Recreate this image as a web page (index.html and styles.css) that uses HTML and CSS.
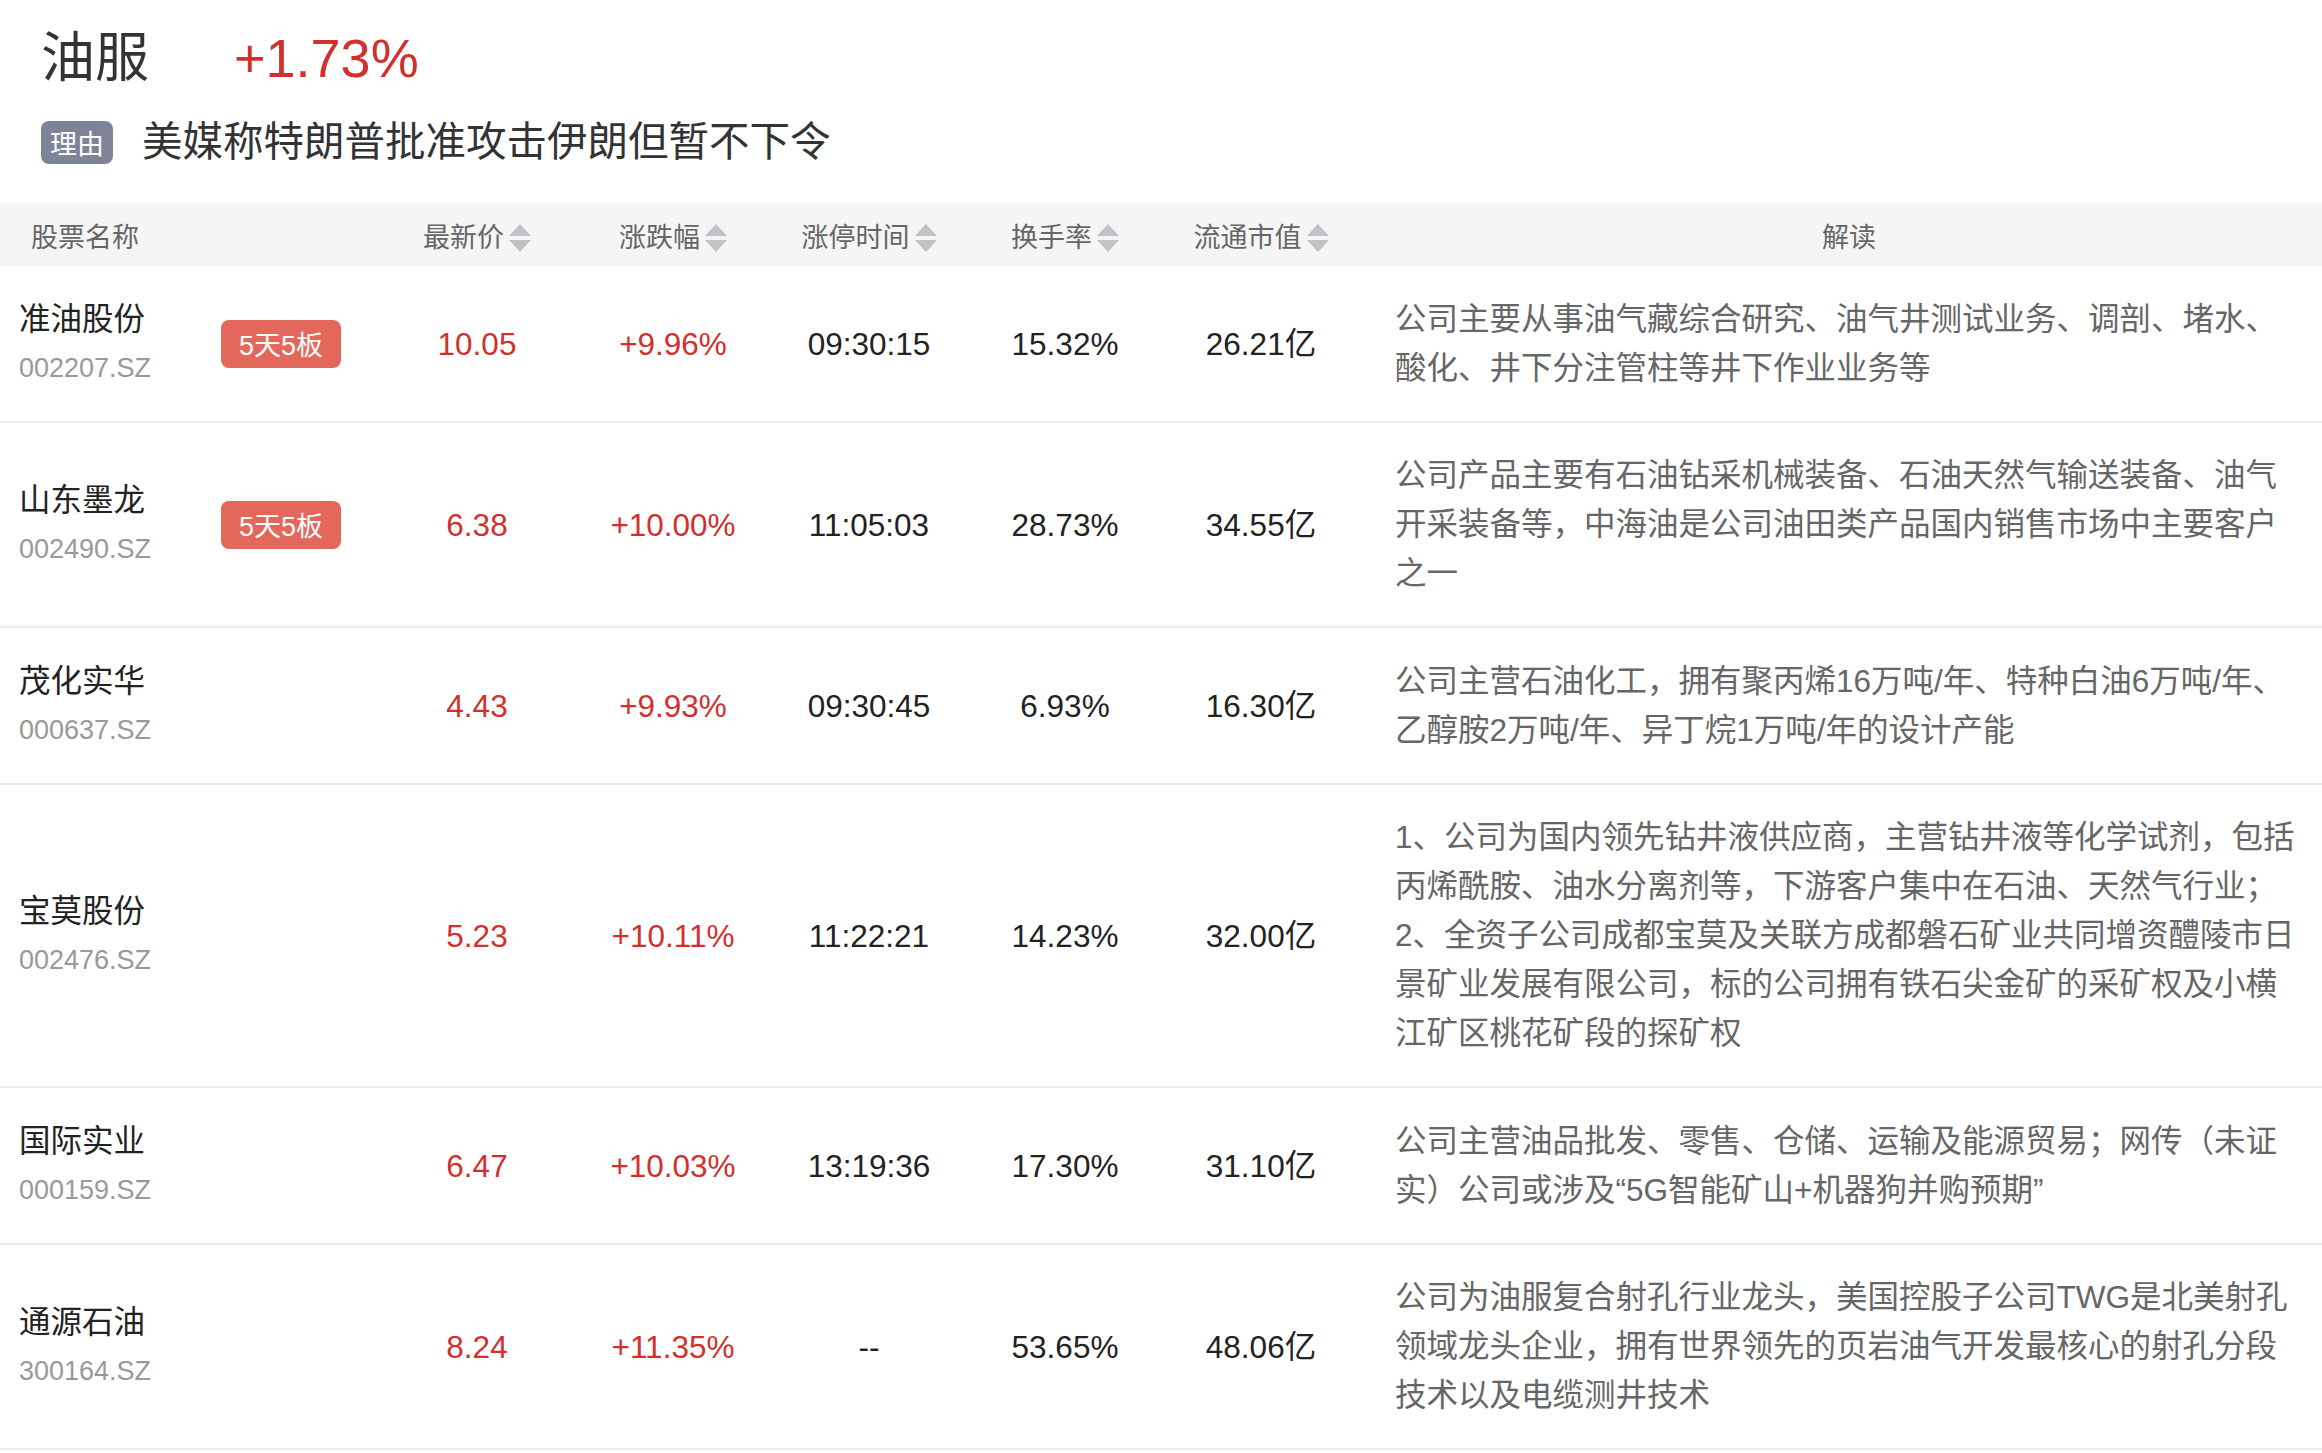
FILE: index.html
```html
<!DOCTYPE html>
<html lang="zh-CN">
<head>
<meta charset="utf-8">
<title>油服</title>
<link rel="stylesheet" href="styles.css">
</head>
<body>
<div class="page">
  <section class="topic">
    <div class="title-row"><span class="title">油服</span><span class="pct">+1.73%</span></div>
    <div class="reason-row"><span class="reason-tag">理由</span><span class="reason">美媒称特朗普批准攻击伊朗但暂不下令</span></div>
  </section>

  <div class="table">
    <div class="thead">
      <div class="th-name">股票名称</div>
      <div class="th">最新价<svg class="sort" viewBox="0 0 22 28"><path d="M11 0 L22 12 L0 12 Z"/><path d="M0 16 L22 16 L11 28 Z"/></svg></div>
      <div class="th">涨跌幅<svg class="sort" viewBox="0 0 22 28"><path d="M11 0 L22 12 L0 12 Z"/><path d="M0 16 L22 16 L11 28 Z"/></svg></div>
      <div class="th">涨停时间<svg class="sort" viewBox="0 0 22 28"><path d="M11 0 L22 12 L0 12 Z"/><path d="M0 16 L22 16 L11 28 Z"/></svg></div>
      <div class="th">换手率<svg class="sort" viewBox="0 0 22 28"><path d="M11 0 L22 12 L0 12 Z"/><path d="M0 16 L22 16 L11 28 Z"/></svg></div>
      <div class="th">流通市值<svg class="sort" viewBox="0 0 22 28"><path d="M11 0 L22 12 L0 12 Z"/><path d="M0 16 L22 16 L11 28 Z"/></svg></div>
      <div class="th-desc">解读</div>
    </div>

    <div class="row">
      <div class="name-cell"><div class="name">准油股份</div><div class="code">002207.SZ</div></div>
      <div class="badge-cell"><span class="badge">5天5板</span></div>
      <div class="num red">10.05</div>
      <div class="num red">+9.96%</div>
      <div class="num">09:30:15</div>
      <div class="num">15.32%</div>
      <div class="num">26.21亿</div>
      <div class="desc">公司主要从事油气藏综合研究、油气井测试业务、调剖、堵水、酸化、井下分注管柱等井下作业业务等</div>
    </div>

    <div class="row">
      <div class="name-cell"><div class="name">山东墨龙</div><div class="code">002490.SZ</div></div>
      <div class="badge-cell"><span class="badge">5天5板</span></div>
      <div class="num red">6.38</div>
      <div class="num red">+10.00%</div>
      <div class="num">11:05:03</div>
      <div class="num">28.73%</div>
      <div class="num">34.55亿</div>
      <div class="desc">公司产品主要有石油钻采机械装备、石油天然气输送装备、油气开采装备等，中海油是公司油田类产品国内销售市场中主要客户之一</div>
    </div>

    <div class="row">
      <div class="name-cell"><div class="name">茂化实华</div><div class="code">000637.SZ</div></div>
      <div class="badge-cell"></div>
      <div class="num red">4.43</div>
      <div class="num red">+9.93%</div>
      <div class="num">09:30:45</div>
      <div class="num">6.93%</div>
      <div class="num">16.30亿</div>
      <div class="desc">公司主营石油化工，拥有聚丙烯16万吨/年、特种白油6万吨/年、乙醇胺2万吨/年、异丁烷1万吨/年的设计产能</div>
    </div>

    <div class="row">
      <div class="name-cell"><div class="name">宝莫股份</div><div class="code">002476.SZ</div></div>
      <div class="badge-cell"></div>
      <div class="num red">5.23</div>
      <div class="num red">+10.11%</div>
      <div class="num">11:22:21</div>
      <div class="num">14.23%</div>
      <div class="num">32.00亿</div>
      <div class="desc">1、公司为国内领先钻井液供应商，主营钻井液等化学试剂，包括丙烯酰胺、油水分离剂等，下游客户集中在石油、天然气行业；<br>2、全资子公司成都宝莫及关联方成都磐石矿业共同增资醴陵市日景矿业发展有限公司，标的公司拥有铁石尖金矿的采矿权及小横江矿区桃花矿段的探矿权</div>
    </div>

    <div class="row">
      <div class="name-cell"><div class="name">国际实业</div><div class="code">000159.SZ</div></div>
      <div class="badge-cell"></div>
      <div class="num red">6.47</div>
      <div class="num red">+10.03%</div>
      <div class="num">13:19:36</div>
      <div class="num">17.30%</div>
      <div class="num">31.10亿</div>
      <div class="desc">公司主营油品批发、零售、仓储、运输及能源贸易；网传（未证实）公司或涉及“5G智能矿山+机器狗并购预期”</div>
    </div>

    <div class="row">
      <div class="name-cell"><div class="name">通源石油</div><div class="code">300164.SZ</div></div>
      <div class="badge-cell"></div>
      <div class="num red">8.24</div>
      <div class="num red">+11.35%</div>
      <div class="num">--</div>
      <div class="num">53.65%</div>
      <div class="num">48.06亿</div>
      <div class="desc">公司为油服复合射孔行业龙头，美国控股子公司TWG是北美射孔领域龙头企业，拥有世界领先的页岩油气开发最核心的射孔分段技术以及电缆测井技术</div>
    </div>
  </div>
</div>
</body>
</html>
```

FILE: styles.css
```css
html, body {
  margin: 0;
  padding: 0;
  background: #ffffff;
}

body {
  font-family: "Liberation Sans", "Noto Sans CJK SC", sans-serif;
  color: #222222;
}

.topic {
  padding: 23px 0 31px 41px;
}

.title-row {
  display: flex;
  align-items: center;
  height: 70px;
  font-size: 54px;
  line-height: 70px;
}

.title {
  color: #333333;
}

.pct {
  color: #d2302c;
  margin-left: 85px;
}

.reason-row {
  display: flex;
  align-items: center;
  height: 60px;
  margin-top: 19px;
}

.reason-tag {
  width: 72px;
  height: 43px;
  border-radius: 8px;
  background: #7e8398;
  color: #ffffff;
  font-size: 27px;
  display: flex;
  align-items: center;
  justify-content: center;
}

.reason {
  margin-left: 29px;
  font-size: 40.5px;
  line-height: 60px;
  color: #333333;
}

.thead,
.row {
  display: grid;
  grid-template-columns: 221px 158px repeat(5, 196px) 1fr;
  align-items: center;
}

.thead {
  height: 63px;
  box-sizing: border-box;
  padding-top: 7px;
  background: #f5f5f5;
  font-size: 27px;
  color: #666666;
  line-height: 56px;
}

.th-name {
  grid-column: span 2;
  padding-left: 31px;
}

.th {
  display: flex;
  justify-content: center;
  align-items: center;
}

.sort {
  width: 22px;
  height: 28px;
  margin-left: 5px;
  fill: #c1c2c7;
}

.th-desc {
  padding-left: 17px;
  text-align: center;
}

.row {
  padding: 28.5px 0 28px;
  border-bottom: 2px solid #ececec;
}

.name-cell {
  padding-left: 19px;
}

.name {
  font-size: 31.5px;
  line-height: 49px;
  color: #222222;
}

.code {
  font-size: 27px;
  line-height: 49px;
  color: #999999;
}

.badge-cell {
  display: flex;
  align-items: center;
}

.badge {
  width: 120px;
  height: 48px;
  border-radius: 8px;
  background: #e4675b;
  color: #ffffff;
  font-size: 27px;
  display: flex;
  align-items: center;
  justify-content: center;
}

.num {
  text-align: center;
  font-size: 31.5px;
  line-height: 40px;
  color: #222222;
}

.num.red {
  color: #d2302c;
}

.desc {
  padding: 0 21px 0 36px;
  font-size: 31.5px;
  line-height: 49px;
  color: #666666;
}
```
